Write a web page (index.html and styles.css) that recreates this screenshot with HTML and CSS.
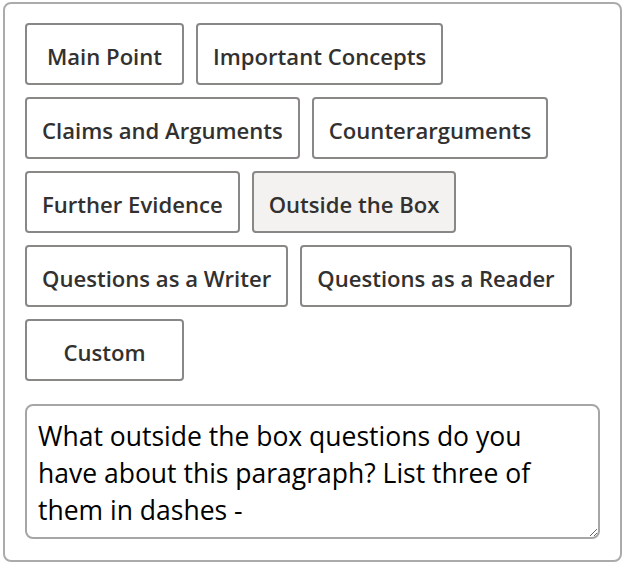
FILE: index.html
```html
<!DOCTYPE html>
<html lang="en">
<head>
<meta charset="utf-8">
<title>Prompt picker</title>
<link rel="stylesheet" href="styles.css">
</head>
<body>
<div class="panel">
  <div class="options">
    <button class="opt">Main Point</button>
    <button class="opt">Important Concepts</button>
    <button class="opt">Claims and Arguments</button>
    <button class="opt">Counterarguments</button>
    <button class="opt">Further Evidence</button>
    <button class="opt is-selected">Outside the Box</button>
    <button class="opt">Questions as a Writer</button>
    <button class="opt">Questions as a Reader</button>
    <button class="opt">Custom</button>
  </div>
  <textarea class="prompt">What outside the box questions do you have about this paragraph? List three of them in dashes -</textarea>
</div>
</body>
</html>
```
FILE: styles.css
```css
* { box-sizing: border-box; }
html, body { margin: 0; padding: 0; background: #fff; }
body { font-family: "Open Sans", "Noto Sans", sans-serif; }

.panel {
  margin: 2px 0 0 3px;
  width: 619px;
  height: 560px;
  border: 2px solid #ababab;
  border-radius: 8px;
  padding: 19px 20px 20px;
  display: flex;
  flex-direction: column;
}

.options {
  display: flex;
  flex-wrap: wrap;
  gap: 12px;
}

.opt {
  font-family: inherit;
  font-size: 22.1px;
  font-weight: 600;
  color: #323130;
  background: #fff;
  border: 2px solid #8a8886;
  border-radius: 4px;
  height: 62px;
  min-width: 159px;
  padding: 3px 15px 0;
  cursor: pointer;
}

.opt.is-selected { background: #f3f2f1; }

.prompt {
  margin-top: 23px;
  width: 575px;
  height: 135px;
  font-family: inherit;
  font-size: 26.5px;
  line-height: 37px;
  color: #000;
  border: 2px solid #a6a6a6;
  border-radius: 8px;
  padding: 12px 20px 4px 11px;
  resize: vertical;
  outline: none;
  overflow: hidden;
}
```
